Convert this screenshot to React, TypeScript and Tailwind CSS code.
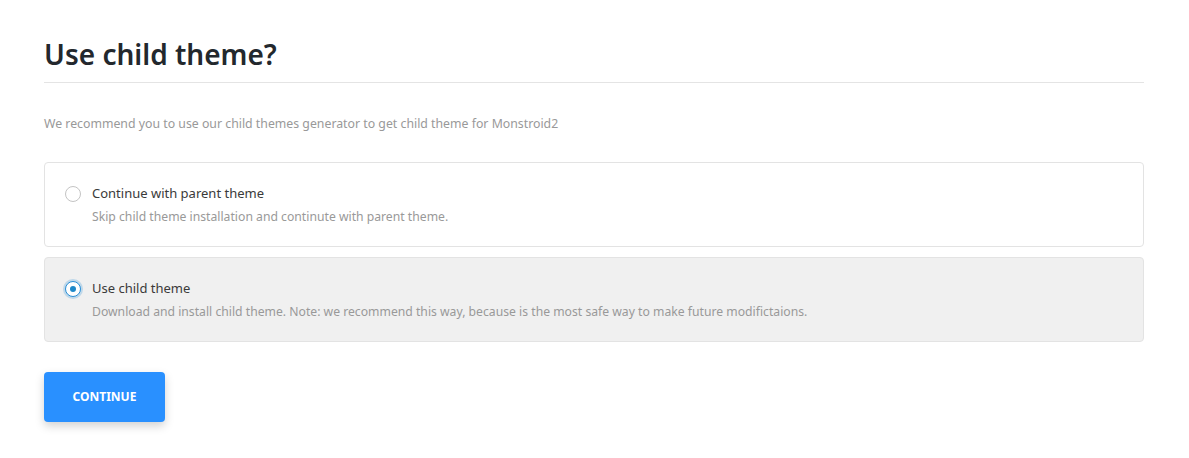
import { useState } from "react";

const options = [
  {
    id: "parent",
    title: "Continue with parent theme",
    desc: "Skip child theme installation and continute with parent theme.",
  },
  {
    id: "child",
    title: "Use child theme",
    desc: "Download and install child theme. Note: we recommend this way, because is the most safe way to make future modifictaions.",
  },
];

function Radio({ checked }: { checked: boolean }) {
  return checked ? (
    <span className="flex h-[16px] w-[16px] shrink-0 items-center justify-center rounded-full border border-[#2a8fd6] bg-white shadow-[0_0_0_2px_rgba(42,143,214,0.25)]">
      <span className="h-[6px] w-[6px] rounded-full bg-[#1e88c9]" />
    </span>
  ) : (
    <span className="h-[16px] w-[16px] shrink-0 rounded-full border border-[#c4c4c4] bg-white" />
  );
}

export default function App() {
  const [selected, setSelected] = useState("child");

  return (
    <div className="min-h-[458px] bg-white pl-[44px] pr-[45px] pt-[36px] font-['Noto_Sans',sans-serif] text-[#333]">
      <h1 className="text-[28px] font-semibold leading-[36px] text-[#23282d]">Use child theme?</h1>
      <div className="mt-[10px] h-px bg-[#e4e4e4]" />
      <p className="mt-[32px] text-[12.3px] leading-[18px] text-[#999]">
        We recommend you to use our child themes generator to get child theme for Monstroid2
      </p>

      <div className="mt-[29px] flex flex-col gap-[10px]">
        {options.map((o) => {
          const on = selected === o.id;
          return (
            <label
              key={o.id}
              onClick={() => setSelected(o.id)}
              className={`flex h-[85px] cursor-pointer gap-[11px] rounded-[4px] border border-[#e3e3e3] pl-[20px] pt-[23px] ${
                on ? "bg-[#f0f0f0]" : "bg-white"
              }`}
            >
              <Radio checked={on} />
              <div className="-mt-[3px]">
                <div className="text-[13px] leading-[20px] text-[#3a3a3a]">{o.title}</div>
                <div className="mt-[5px] text-[12.2px] leading-[18px] text-[#999]">{o.desc}</div>
              </div>
            </label>
          );
        })}
      </div>

      <button className="mt-[30px] h-[50px] w-[121px] rounded-[4px] bg-[#2990ff] text-[12px] font-bold text-white shadow-[0_4px_10px_rgba(0,0,0,0.18)]">
        CONTINUE
      </button>
    </div>
  );
}
